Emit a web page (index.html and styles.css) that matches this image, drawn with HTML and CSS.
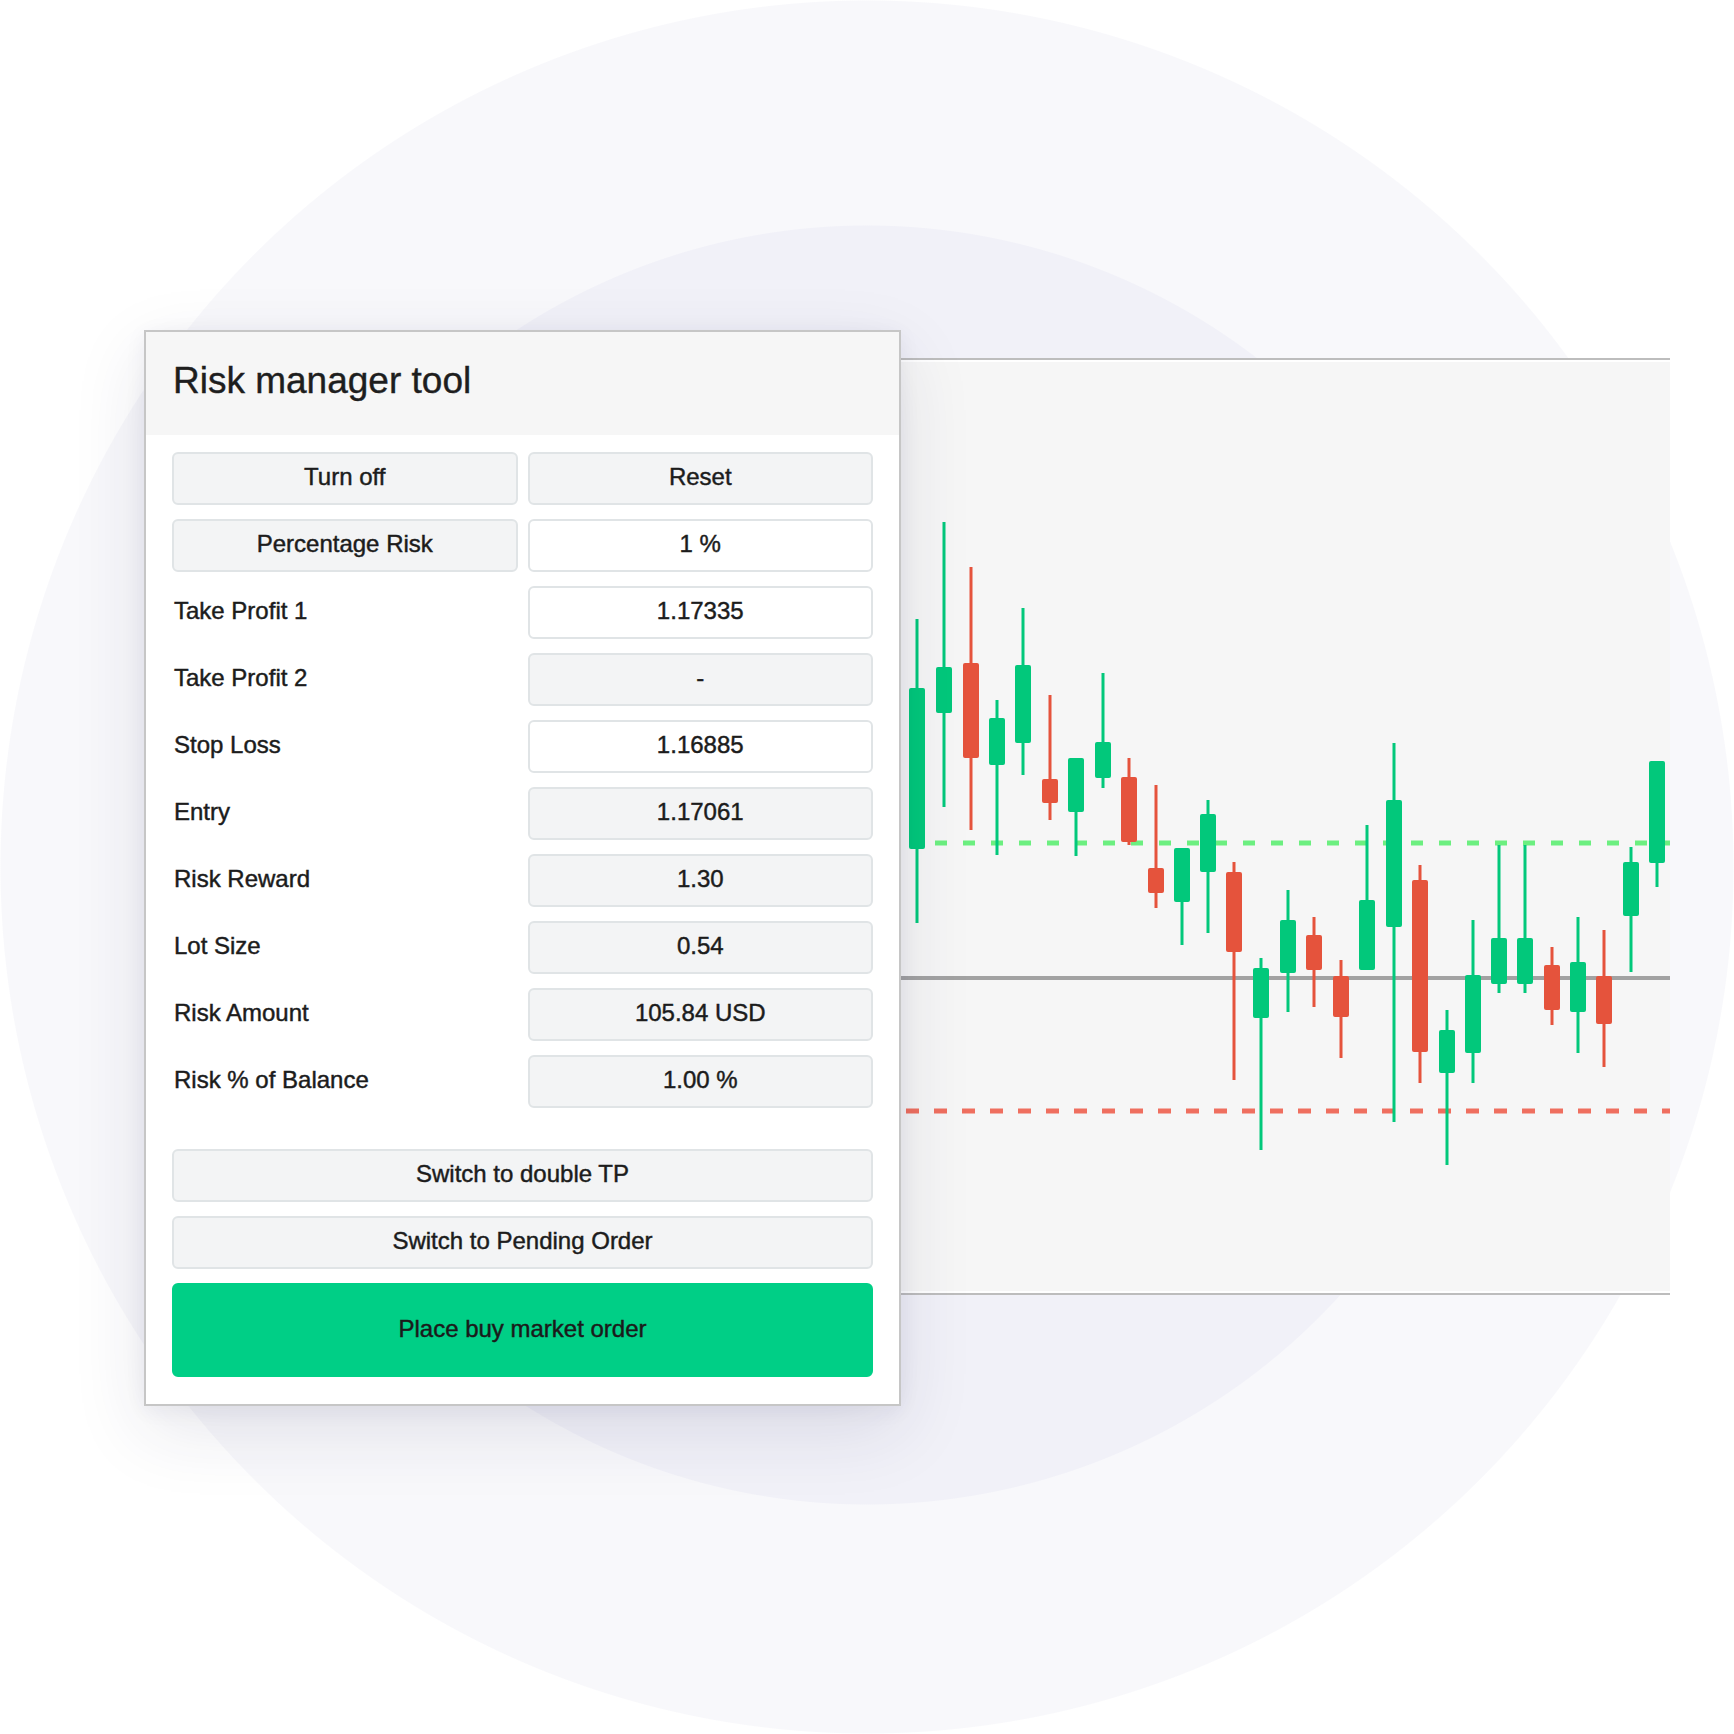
FILE: index.html
```html
<!DOCTYPE html>
<html lang="en">
<head>
<meta charset="utf-8">
<title>Risk manager tool</title>
<link rel="stylesheet" href="styles.css">
</head>
<body>
<div class="stage">
  <div class="scene">
    <div class="panel">
      <div class="panel-header"><h1 class="title">Risk manager tool</h1></div>
      <div class="panel-body">
        <div class="grid">
          <div class="btn">Turn off</div>
          <div class="btn">Reset</div>
          <div class="btn">Percentage Risk</div>
          <div class="field white">1 %</div>
          <div class="label">Take Profit 1</div>
          <div class="field white">1.17335</div>
          <div class="label">Take Profit 2</div>
          <div class="field">-</div>
          <div class="label">Stop Loss</div>
          <div class="field white">1.16885</div>
          <div class="label">Entry</div>
          <div class="field">1.17061</div>
          <div class="label">Risk Reward</div>
          <div class="field">1.30</div>
          <div class="label">Lot Size</div>
          <div class="field">0.54</div>
          <div class="label">Risk Amount</div>
          <div class="field">105.84 USD</div>
          <div class="label">Risk % of Balance</div>
          <div class="field">1.00 %</div>
        </div>
        <div class="actions">
          <div class="btn">Switch to double TP</div>
          <div class="btn">Switch to Pending Order</div>
          <div class="btn primary">Place buy market order</div>
        </div>
      </div>
    </div>
    <div class="chart">
      <svg class="chart-svg" width="769" height="937" viewBox="901 358 769 937" xmlns="http://www.w3.org/2000/svg">
        <rect x="901" y="358" width="769" height="937" fill="#ffffff"/>
        <rect x="901" y="362" width="769" height="929" fill="#f6f6f6"/>
        <rect x="901" y="358" width="769" height="2" fill="#bdbdbd"/>
        <rect x="901" y="1293" width="769" height="2" fill="#bdbdbd"/>
        <line x1="901" y1="978" x2="1670" y2="978" stroke="#a2a2a2" stroke-width="4"/>
        <line x1="935" y1="843" x2="1670" y2="843" stroke="#6cef80" stroke-width="5" stroke-dasharray="12 16"/>
        <line x1="906" y1="1111" x2="1670" y2="1111" stroke="#ef6f5f" stroke-width="5" stroke-dasharray="13 15"/>
        <g id="candles"></g>
      </svg>
    </div>
  </div>
</div>
<script src="script.js"></script>
</body>
</html>
```
FILE: styles.css
```css
* { box-sizing: border-box; }
html, body { margin: 0; padding: 0; }
body {
  width: 1734px;
  height: 1734px;
  background: #ffffff;
  font-family: "Liberation Sans", Arial, sans-serif;
  color: #1c1c1c;
  overflow: hidden;
}
.stage {
  width: 1734px;
  height: 1734px;
  background:
    radial-gradient(circle at 867px 865px, #f1f1f8 0, #f1f1f8 639px, rgba(241,241,248,0) 640px),
    radial-gradient(circle at 867px 867px, #f8f8fb 0, #f8f8fb 866px, #ffffff 867px);
}
.scene {
  display: flex;
  align-items: flex-start;
  padding: 330px 0 0 144px;
}
.panel {
  position: relative;
  z-index: 2;
  width: 757px;
  flex: none;
  background: #ffffff;
  border: 2px solid #c6c6c6;
  box-shadow: 0 24px 70px rgba(40, 40, 80, 0.11), 0 4px 20px rgba(40, 40, 80, 0.06);
}
.panel-header {
  height: 103px;
  background: #f6f6f6;
  padding: 28px 26px 0 27px;
}
.title {
  margin: 0;
  font-size: 37px;
  font-weight: 400;
  line-height: 41px;
  color: #1e1e1e;
  -webkit-text-stroke: 0.4px #1e1e1e;
}
.panel-body {
  padding: 17px 26px 27px;
}
.grid {
  display: grid;
  grid-template-columns: 1fr 1fr;
  grid-auto-rows: 53px;
  column-gap: 10px;
  row-gap: 14px;
}
.btn, .field {
  display: flex;
  align-items: center;
  justify-content: center;
  padding-bottom: 3px;
  background: #f3f4f5;
  border: 2px solid #e0e4e6;
  border-radius: 6px;
  font-size: 24px;
  color: #1c1c1c;
  -webkit-text-stroke: 0.45px #1c1c1c;
}
.field.white { background: #ffffff; }
.label {
  display: flex;
  align-items: center;
  padding: 0 0 3px 2px;
  font-size: 24px;
  color: #1c1c1c;
  -webkit-text-stroke: 0.45px #1c1c1c;
}
.actions {
  margin-top: 41px;
  display: flex;
  flex-direction: column;
  gap: 14px;
}
.actions .btn { height: 53px; }
.actions .btn.primary {
  height: 94px;
  background: #00cf86;
  border-color: #00cf86;
  color: #1a1a1a;
}
.chart {
  position: relative;
  z-index: 1;
  flex: none;
  width: 769px;
  height: 937px;
  margin-top: 28px;
}
.chart-svg { display: block; }
```
FILE: script.js
```js
(function () {
  var G = "#02c87b", R = "#e5533c";
  var c = [
    [917, 619, 923, 688, 849, G],
    [944, 522, 807, 667, 713, G],
    [971, 567, 830, 663, 758, R],
    [997, 700, 855, 718, 765, G],
    [1023, 608, 775, 665, 743, G],
    [1050, 695, 820, 779, 803, R],
    [1076, 758, 856, 758, 812, G],
    [1103, 673, 788, 742, 778, G],
    [1129, 758, 845, 777, 842, R],
    [1156, 785, 908, 868, 893, R],
    [1182, 848, 945, 848, 902, G],
    [1208, 800, 933, 814, 872, G],
    [1234, 862, 1080, 872, 952, R],
    [1261, 958, 1150, 968, 1018, G],
    [1288, 890, 1012, 920, 973, G],
    [1314, 917, 1007, 935, 970, R],
    [1341, 960, 1058, 976, 1017, R],
    [1367, 825, 970, 900, 970, G],
    [1394, 743, 1122, 800, 927, G],
    [1420, 865, 1083, 880, 1052, R],
    [1447, 1010, 1165, 1030, 1073, G],
    [1473, 920, 1083, 975, 1053, G],
    [1499, 845, 993, 938, 984, G],
    [1525, 845, 993, 938, 984, G],
    [1552, 947, 1025, 965, 1010, R],
    [1578, 917, 1053, 962, 1012, G],
    [1604, 930, 1067, 976, 1024, R],
    [1631, 847, 972, 862, 916, G],
    [1657, 761, 887, 761, 863, G]
  ];
  var ns = "http://www.w3.org/2000/svg";
  var g = document.getElementById("candles");
  c.forEach(function (d) {
    var w = document.createElementNS(ns, "rect");
    w.setAttribute("x", d[0] - 1.5);
    w.setAttribute("y", d[1]);
    w.setAttribute("width", 3);
    w.setAttribute("height", d[2] - d[1]);
    w.setAttribute("fill", d[5]);
    g.appendChild(w);
    var b = document.createElementNS(ns, "rect");
    b.setAttribute("x", d[0] - 8);
    b.setAttribute("y", d[3]);
    b.setAttribute("width", 16);
    b.setAttribute("height", d[4] - d[3]);
    b.setAttribute("rx", 2);
    b.setAttribute("fill", d[5]);
    g.appendChild(b);
  });
})();
```
